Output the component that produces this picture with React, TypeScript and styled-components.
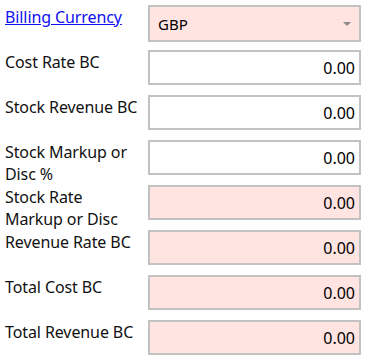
import { createGlobalStyle } from 'styled-components';
import styled from 'styled-components';

const GlobalStyle = createGlobalStyle`
  body {
    margin: 0;
    background: #ffffff;
    font-family: 'Noto Sans', 'Open Sans', sans-serif;
  }
`;

const Form = styled.div`
  display: grid;
  grid-template-columns: 143px 213px;
  grid-auto-rows: 45px;
  padding: 5px 0 0 5px;
  width: 374px;
  box-sizing: border-box;
`;

const Label = styled.div`
  font-size: 16px;
  line-height: 22px;
  color: #111;
  max-width: 138px;
  padding-top: 1px;
  letter-spacing: -0.1px;
`;

const LinkLabel = styled.a`
  font-size: 16px;
  line-height: 22px;
  color: #1010f0;
  text-decoration: underline;
  cursor: pointer;
  align-self: start;
  padding-top: 1px;
  letter-spacing: -0.1px;
`;

const Field = styled.div<{ $locked?: boolean; $tall?: boolean }>`
  box-sizing: border-box;
  height: ${(p) => (p.$tall ? '37px' : '35px')};
  border: 2px solid #c2c2c2;
  background: ${(p) => (p.$locked ? '#ffe4e1' : '#ffffff')};
  display: flex;
  align-items: center;
  justify-content: flex-end;
  padding: 0 4px 0 8px;
  font-size: 16px;
  color: #000;
`;

const Select = styled(Field)`
  justify-content: space-between;
  font-size: 15px;
`;

const Caret = styled.span`
  width: 0;
  height: 0;
  border-left: 4px solid transparent;
  border-right: 4px solid transparent;
  border-top: 4px solid #8a8a8a;
  margin-right: 4px;
`;

type Row = { label: string; locked: boolean };

const rows: Row[] = [
  { label: 'Cost Rate BC', locked: false },
  { label: 'Stock Revenue BC', locked: false },
  { label: 'Stock Markup or Disc %', locked: false },
  { label: 'Stock Rate Markup or Disc', locked: true },
  { label: 'Revenue Rate BC', locked: true },
  { label: 'Total Cost BC', locked: true },
  { label: 'Total Revenue BC', locked: true },
];

export default function App() {
  return (
    <>
      <GlobalStyle />
      <Form>
        <LinkLabel>Billing Currency</LinkLabel>
        <Select $locked $tall>
          <span>GBP</span>
          <Caret />
        </Select>
        {rows.map((r) => (
          <>
            <Label key={r.label}>{r.label}</Label>
            <Field key={r.label + '-f'} $locked={r.locked}>
              0.00
            </Field>
          </>
        ))}
      </Form>
    </>
  );
}
